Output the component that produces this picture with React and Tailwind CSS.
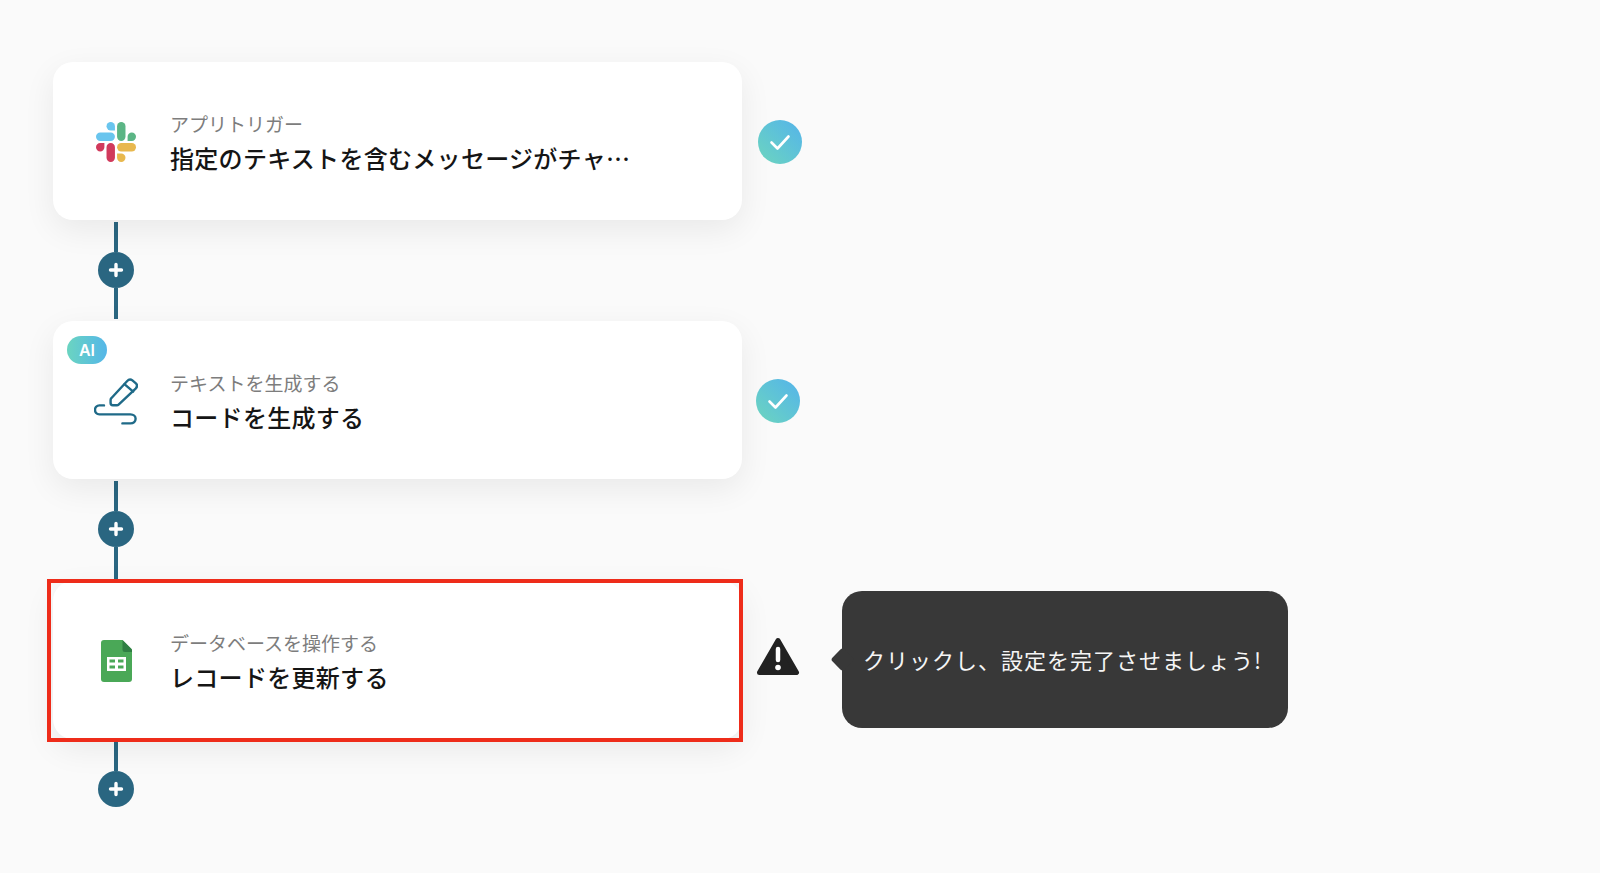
import React from "react";

const FONT = "font-['Noto_Sans_CJK_JP','Noto_Sans',sans-serif]";

function SlackIcon() {
  return (
    <svg viewBox="0 0 24 24" className="w-10 h-10">
      <path fill="#d13a5c" d="M5.042 15.165a2.528 2.528 0 0 1-2.52 2.523A2.528 2.528 0 0 1 0 15.165a2.527 2.527 0 0 1 2.522-2.52h2.52v2.52z" />
      <path fill="#d13a5c" d="M6.313 15.165a2.527 2.527 0 0 1 2.521-2.52 2.527 2.527 0 0 1 2.521 2.52v6.313A2.528 2.528 0 0 1 8.834 24a2.528 2.528 0 0 1-2.521-2.522v-6.313z" />
      <path fill="#69c5ee" d="M8.834 5.042a2.528 2.528 0 0 1-2.521-2.52A2.528 2.528 0 0 1 8.834 0a2.528 2.528 0 0 1 2.521 2.522v2.52H8.834z" />
      <path fill="#69c5ee" d="M8.834 6.313a2.528 2.528 0 0 1 2.521 2.521 2.528 2.528 0 0 1-2.521 2.521H2.522A2.528 2.528 0 0 1 0 8.834a2.528 2.528 0 0 1 2.522-2.521h6.312z" />
      <path fill="#5bb585" d="M18.956 8.834a2.528 2.528 0 0 1 2.522-2.521A2.528 2.528 0 0 1 24 8.834a2.528 2.528 0 0 1-2.522 2.521h-2.522V8.834z" />
      <path fill="#5bb585" d="M17.688 8.834a2.528 2.528 0 0 1-2.523 2.521 2.527 2.527 0 0 1-2.52-2.521V2.522A2.527 2.527 0 0 1 15.165 0a2.528 2.528 0 0 1 2.523 2.522v6.312z" />
      <path fill="#e8b84e" d="M15.165 18.956a2.528 2.528 0 0 1 2.523 2.522A2.528 2.528 0 0 1 15.165 24a2.527 2.527 0 0 1-2.52-2.522v-2.522h2.52z" />
      <path fill="#e8b84e" d="M15.165 17.688a2.527 2.527 0 0 1-2.52-2.523 2.526 2.526 0 0 1 2.52-2.52h6.313A2.527 2.527 0 0 1 24 15.165a2.528 2.528 0 0 1-2.522 2.523h-6.313z" />
    </svg>
  );
}

function PenIcon() {
  return (
    <svg viewBox="0 0 44 48" className="w-11 h-12" fill="none" stroke="#1f6a88" strokeWidth="2.4" strokeLinecap="round" strokeLinejoin="round">
      <path d="M33 4.2c1.7-1.9 3.6-2.2 5.4-.8l3.2 2.7c1.7 1.5 1.8 3.4.3 5.2L24.6 27.6c-.5.5-1 .7-1.7.7H18.8c-1.3 0-2.2-.9-2.2-2.2v-3.2c0-.7.2-1.2.7-1.7z" />
      <path d="M30.4 7.2l8.8 7.4" />
      <path d="M10 28.4H5.4C2.6 28.4 1 30.4 1 32.8s1.6 4.6 4.4 4.6h31c3.2 0 5.2 1.9 5.2 4.4s-2 4.6-5.2 4.6h-8" />
    </svg>
  );
}

function SheetsIcon() {
  return (
    <svg viewBox="0 0 31 42" className="w-[31px] h-[42px]">
      <path fill="#4aa857" d="M3 0h18.5L31 9.5V39a3 3 0 0 1-3 3H3a3 3 0 0 1-3-3V3a3 3 0 0 1 3-3z" />
      <path fill="#2f7f43" d="M21.5 0L31 9.5V12h-7a2.500 2.500 0 0 1-2.500-2.500z" />
      <path fill="#ffffff" fillRule="evenodd" d="M6 17h19v14H6zM8.500 19.500v3h5.500v-3zM17 19.500v3h5.500v-3zM8.500 25.500v3h5.500v-3zM17 25.500v3h5.500v-3z" />
    </svg>
  );
}

function WarningIcon() {
  return (
    <svg viewBox="0 0 44 40" className="w-11 h-10">
      <path fill="#222222" stroke="#222222" strokeWidth="5" strokeLinejoin="round" d="M22 4.500L40.500 36.500H3.500z" />
      <path fill="none" stroke="#ffffff" strokeWidth="4.500" strokeLinecap="round" d="M22 13v11" />
      <circle cx="22" cy="31.500" r="2.800" fill="#ffffff" />
    </svg>
  );
}

function Check({ className }) {
  return (
    <div className={`w-[44px] h-[44px] translate-y-[1px] rounded-full bg-linear-to-tr from-[#6dd5bd] to-[#55b3ea] flex items-center justify-center ${className}`}>
      <svg viewBox="0 0 24 24" className="w-6 h-6" fill="none" stroke="#ffffff" strokeWidth="2.600" strokeLinecap="round" strokeLinejoin="round">
        <path d="M3.500 12.500l6 6L20.500 6.500" />
      </svg>
    </div>
  );
}

function Card({ icon, sub, title, badge, outlined }) {
  return (
    <div className="relative w-[689px] h-[158px] shrink-0 bg-white rounded-[20px] shadow-[0_10px_32px_rgba(0,0,0,0.07)] flex items-center pl-[40px]">
      <div className="w-[46px] h-[48px] mt-[2px] flex items-center justify-center shrink-0">{icon}</div>
      <div className="ml-[31px] pt-[3px] flex flex-col">
        <div className="text-[19px] leading-[26px] text-[#7d7d7d] whitespace-nowrap">{sub}</div>
        <div className="mt-[4px] text-[24px] leading-[34px] tracking-[0.3px] font-medium text-[#151515] whitespace-nowrap">{title}</div>
      </div>
      {badge && (
        <div className="absolute left-[14px] top-[15px] w-[40px] h-[28px] rounded-full bg-linear-to-r from-[#6bd4c0] to-[#55b6e8] flex items-center justify-center text-white text-[16px] font-semibold font-['Inter',sans-serif]">
          AI
        </div>
      )}
      {outlined && (
        <div className="absolute -left-[6px] -top-[2px] -right-[1px] -bottom-[3px] border-[4px] border-[#ee2c1a] pointer-events-none" />
      )}
    </div>
  );
}

function Connector({ height, tail = true }) {
  return (
    <div className={`w-[126px] flex flex-col items-center pt-[2px] ${height}`}>
      <div className="w-[4px] h-[30px] shrink-0 bg-[#2a6681]" />
      <div className="w-[36px] h-[36px] rounded-full bg-[#2a6681] flex items-center justify-center shrink-0">
        <svg viewBox="0 0 16 16" className="w-4 h-4" fill="none" stroke="#ffffff" strokeWidth="3.400" strokeLinecap="round">
          <path d="M8 2.500v11M2.500 8h11" />
        </svg>
      </div>
      {tail && <div className="w-[4px] flex-1 bg-[#2a6681] mb-[2px]" />}
    </div>
  );
}

export default function App() {
  return (
    <div className={`min-h-[873px] h-[873px] overflow-hidden bg-[#fafafa] pt-[62px] pl-[53px] ${FONT}`}>
      <div className="flex items-center">
        <Card
          icon={<SlackIcon />}
          sub="アプリトリガー"
          title="指定のテキストを含むメッセージがチャ…"
        />
        <Check className="ml-[16px]" />
      </div>
      <Connector height="h-[101px]" />
      <div className="flex items-center">
        <Card icon={<PenIcon />} sub="テキストを生成する" title="コードを生成する" badge />
        <Check className="ml-[14px]" />
      </div>
      <Connector height="h-[102px]" />
      <div className="flex items-center">
        <Card icon={<SheetsIcon />} sub="データベースを操作する" title="レコードを更新する" outlined />
        <div className="ml-[14px] -translate-y-[4px]">
          <WarningIcon />
        </div>
        <div className="relative ml-[42px] -translate-y-[1px] w-[446px] h-[137px] rounded-[20px] bg-[#383838] flex items-center pl-[21px] text-[#f5f5f5] text-[22px] tracking-[1px] whitespace-nowrap">
          <div className="absolute -left-[8px] top-[60px] w-[17px] h-[17px] rotate-45 rounded-[3px] bg-[#383838]" />
          <span className="relative">クリックし、設定を完了させましょう!</span>
        </div>
      </div>
      <Connector height="h-[72px]" tail={false} />
    </div>
  );
}
